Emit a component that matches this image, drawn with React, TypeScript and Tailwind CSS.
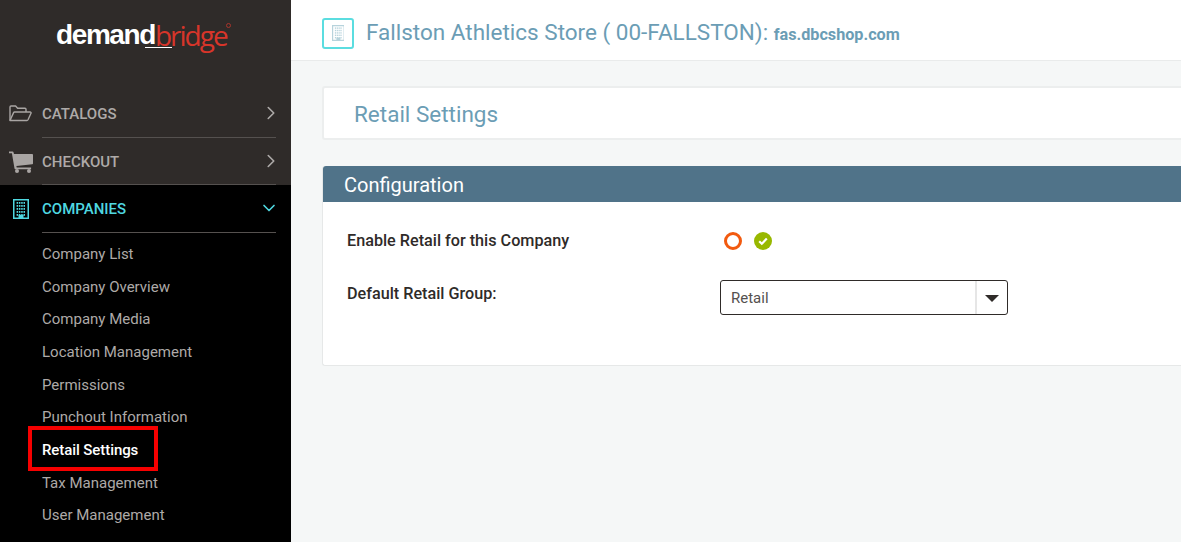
import React from "react";
import { ChevronRight, ChevronDown } from "lucide-react";

function Cart() {
  return (
    <svg width="24" height="24" viewBox="0 0 24 24" className="text-[#a9a5a3]" fill="currentColor">
      <path d="M0 2.5h3.6c.5 0 .8.3.9.7L5 5h18.2c.4 0 .8.4.8.8v8.6c0 .4-.3.7-.7.8L7.4 17l.3 1.5h14.4v1.7H6.4c-.4 0-.8-.3-.9-.7L2.9 4.2H0z" />
      <circle cx="8" cy="22" r="2" />
      <circle cx="20" cy="22" r="2" />
    </svg>
  );
}

function Folder() {
  return (
    <svg width="23" height="17" viewBox="0 0 23 17" fill="none" stroke="#a9a5a3" strokeWidth="1.4" strokeLinejoin="round" className="ml-[-2px]">
      <path d="M1 15.5V2c0-.6.4-1 1-1h4.6l2 2.2H16c.6 0 1 .4 1 1V7" />
      <path d="M1 15.5 4.6 7.6c.2-.4.5-.6.9-.6h15.6c.7 0 1.2.7.9 1.3l-3 6.5c-.2.4-.6.7-1 .7z" />
    </svg>
  );
}

function Building({ size, color }: { size: number; color: string }) {
  const cells: React.ReactNode[] = [];
  for (let r = 0; r < 5; r++) {
    for (let c = 0; c < 4; c++) {
      cells.push(<rect key={`${r}-${c}`} x={3.6 + c * 2.3} y={3 + r * 3} width="1.5" height="1.8" />);
    }
  }
  return (
    <svg width={size * 0.8} height={size} viewBox="0 0 16 20" fill={color} aria-hidden="true">
      <path fillRule="evenodd" d="M0 0h16v20H0zM1.5 1.5v17h4v-2.6h5v2.6h4v-17z" />
      {cells}
    </svg>
  );
}

function NavRow({ icon, label, open }: { icon: React.ReactNode; label: string; open?: boolean }) {
  return (
    <div className={`flex h-[47.5px] items-stretch ${open ? "bg-black" : ""}`}>
      <div className="flex w-[42px] shrink-0 items-center justify-center">{icon}</div>
      <div className="mr-[15px] flex flex-1 items-center justify-between border-b border-[#55514f]">
        <span className={`relative top-[1px] text-[15px] font-medium ${open ? "text-[#4fd8e0]" : "text-[#aeaaa8]"}`}>{label}</span>
        {open ? (
          <ChevronDown size={20} strokeWidth={2} className="mr-[-3px] text-[#4fd8e0]" />
        ) : (
          <ChevronRight size={22} strokeWidth={1.75} className="mr-[-6px] text-[#aeaaa8]" />
        )}
      </div>
    </div>
  );
}

const subItems = [
  "Company List",
  "Company Overview",
  "Company Media",
  "Location Management",
  "Permissions",
  "Punchout Information",
  "Retail Settings",
  "Tax Management",
  "User Management",
];

export default function App() {
  return (
    <div className="flex h-[542px] w-[1181px] overflow-hidden bg-[#f5f7f7] font-['Roboto',sans-serif]">
      <aside className="flex w-[291px] shrink-0 flex-col bg-[#2f2b29]">
        <div className="flex h-[90px] shrink-0 justify-start pl-[56px] pt-[16px]">
          <div className="relative flex h-[40px] items-start text-[28px] leading-[38px] tracking-[-1.4px]">
            <span className="font-['Liberation_Sans',sans-serif] font-bold text-white">demand</span>
            <span className="font-['Open_Sans',sans-serif] font-normal tracking-[-2px] text-[#d8352a]">bridge</span>
            <span className="absolute right-[-4px] top-[7px] h-[5px] w-[5px] rounded-full border border-[#a8352c]" />
            <span className="absolute left-[89px] top-[31px] h-[1px] w-[27px] bg-white" />
          </div>
        </div>
        <NavRow icon={<Folder />} label="CATALOGS" />
        <NavRow icon={<Cart />} label="CHECKOUT" />
        <div className="flex-1 bg-black">
          <NavRow icon={<Building size={20} color="#4fd8e0" />} label="COMPANIES" open />
          <ul className="pt-[4.6px] text-[15px]">
            {subItems.map((item) => {
              const active = item === "Retail Settings";
              return (
                <li key={item} className="flex h-[32.65px] items-center pl-[42px]">
                  <span className={active ? "relative top-[1px] font-medium tracking-[-0.08px] text-white" : "relative top-[1px] text-[#aeaaa8]"}>
                    {item}
                    {active ? (
                      <span className="absolute left-[-14px] top-[-13px] h-[45px] w-[130px] border-[4px] border-[#f60000]" />
                    ) : null}
                  </span>
                </li>
              );
            })}
          </ul>
        </div>
      </aside>

      <main className="flex min-w-0 flex-1 flex-col">
        <header className="flex h-[61px] shrink-0 items-center border-b border-[#e9ebeb] bg-white pb-[2px] pl-[31px]">
          <div className="relative top-[4px] flex h-[31px] w-[32px] items-center justify-center rounded-[3px] border-2 border-[#5bdde0]">
            <Building size={16} color="#b7d3dc" />
          </div>
          <h1 className="relative top-[4px] ml-[12px] text-[22.5px] font-normal text-[#6b9db5]">
            Fallston Athletics Store ( 00-FALLSTON):{" "}
            <span className="text-[16.2px] font-bold">fas.dbcshop.com</span>
          </h1>
        </header>

        <div className="flex flex-col pl-[31px] pt-[25px]">
          <div className="flex h-[54px] items-center rounded-l-[3px] border-2 border-r-0 border-[#eceeee] bg-white pl-[30px]">
            <h2 className="relative top-[2px] text-[22.5px] font-normal text-[#6b9db5]">Retail Settings</h2>
          </div>

          <section className="mt-[26px] h-[200px] rounded-l-[3px] border-b border-l border-[#e6e8e8] bg-white">
            <div className="flex h-[36px] items-center rounded-tl-[3px] bg-[#507389] pl-[21px] pt-[1px] text-[20px] font-normal text-white">
              Configuration
            </div>
            <div>
              <div className="mt-[20px] flex h-[38px] items-center pl-[24px]">
                <span className="w-[374px] text-[16.2px] font-medium text-[#2f2b29]">Enable Retail for this Company</span>
                <span className="ml-[3px] h-[18px] w-[18px] rounded-full border-[3px] border-[#f25a0f]" />
                <span className="ml-[12px] flex h-[18px] w-[18px] items-center justify-center rounded-full bg-[#98b800]">
                  <svg width="12" height="12" viewBox="0 0 12 12" fill="none" stroke="white" strokeWidth="2.2">
                    <path d="M2.2 6.2l2.6 2.6 5-5.2" />
                  </svg>
                </span>
              </div>
              <div className="mt-[20px] flex items-start pl-[24px]">
                <span className="w-[373px] pt-[2px] text-[16.2px] font-medium text-[#2f2b29]">Default Retail Group:</span>
                <div className="flex h-[35px] w-[288px] items-stretch rounded-[3px] border border-[#2f2b29] bg-white">
                  <span className="flex flex-1 items-center pl-[10px] pt-[1px] text-[15px] text-[#55514f]">Retail</span>
                  <span className="flex w-[32px] items-center justify-center border-l-2 border-[#e6e6e6]">
                    <span className="mt-[2px] h-0 w-0 border-x-[7px] border-t-[7px] border-x-transparent border-t-[#2f2b29]" />
                  </span>
                </div>
              </div>
            </div>
          </section>
        </div>
      </main>
    </div>
  );
}
